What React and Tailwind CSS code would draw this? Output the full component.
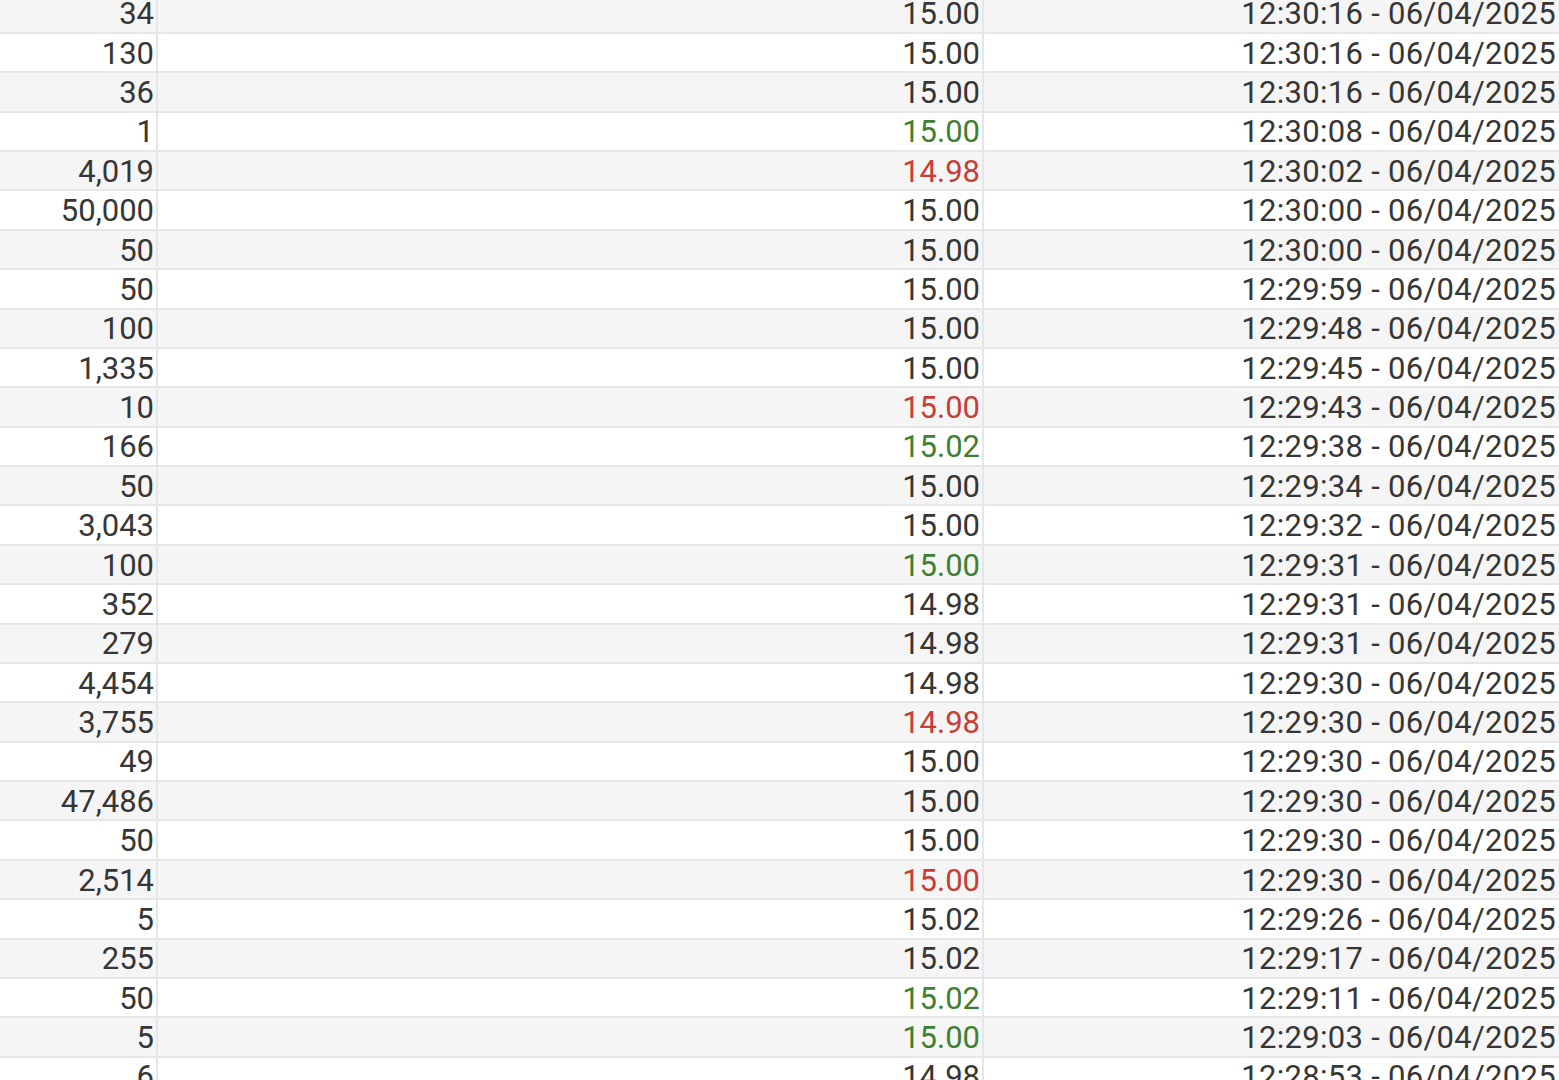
const rows = [
  ['34', '15.00', '', '12:30:16 - 06/04/2025'],
  ['130', '15.00', '', '12:30:16 - 06/04/2025'],
  ['36', '15.00', '', '12:30:16 - 06/04/2025'],
  ['1', '15.00', 'up', '12:30:08 - 06/04/2025'],
  ['4,019', '14.98', 'down', '12:30:02 - 06/04/2025'],
  ['50,000', '15.00', '', '12:30:00 - 06/04/2025'],
  ['50', '15.00', '', '12:30:00 - 06/04/2025'],
  ['50', '15.00', '', '12:29:59 - 06/04/2025'],
  ['100', '15.00', '', '12:29:48 - 06/04/2025'],
  ['1,335', '15.00', '', '12:29:45 - 06/04/2025'],
  ['10', '15.00', 'down', '12:29:43 - 06/04/2025'],
  ['166', '15.02', 'up', '12:29:38 - 06/04/2025'],
  ['50', '15.00', '', '12:29:34 - 06/04/2025'],
  ['3,043', '15.00', '', '12:29:32 - 06/04/2025'],
  ['100', '15.00', 'up', '12:29:31 - 06/04/2025'],
  ['352', '14.98', '', '12:29:31 - 06/04/2025'],
  ['279', '14.98', '', '12:29:31 - 06/04/2025'],
  ['4,454', '14.98', '', '12:29:30 - 06/04/2025'],
  ['3,755', '14.98', 'down', '12:29:30 - 06/04/2025'],
  ['49', '15.00', '', '12:29:30 - 06/04/2025'],
  ['47,486', '15.00', '', '12:29:30 - 06/04/2025'],
  ['50', '15.00', '', '12:29:30 - 06/04/2025'],
  ['2,514', '15.00', 'down', '12:29:30 - 06/04/2025'],
  ['5', '15.02', '', '12:29:26 - 06/04/2025'],
  ['255', '15.02', '', '12:29:17 - 06/04/2025'],
  ['50', '15.02', 'up', '12:29:11 - 06/04/2025'],
  ['5', '15.00', 'up', '12:29:03 - 06/04/2025'],
  ['6', '14.98', '', '12:28:53 - 06/04/2025'],
];

const priceColor = {
  up: 'text-[#3f7f32]',
  down: 'text-[#c63e35]',
  '': 'text-[#363636]',
};

export default function App() {
  return (
    <div className="h-[1080px] w-full overflow-hidden bg-white font-['Roboto',sans-serif] text-[31px] leading-none text-[#363636]">
      <div className="-mt-[5.4px]">
        {rows.map((r, i) => (
          <div
            key={i}
            className={`flex h-[39.385px] border-b-2 border-[#e6e6e6] ${i % 2 === 0 ? 'bg-[#f5f5f5]' : 'bg-white'}`}
          >
            <div className="flex w-[158px] items-center justify-end border-r-2 border-[#e6e6e6] pr-[2px] pt-px">{r[0]}</div>
            <div className={`flex w-[826px] items-center justify-end border-r-2 border-[#e6e6e6] pr-[2px] pt-px ${priceColor[r[2]]}`}>{r[1]}</div>
            <div className="flex flex-1 items-center justify-end pr-[3px] pt-px tracking-[0.3px]">{r[3]}</div>
          </div>
        ))}
      </div>
    </div>
  );
}
